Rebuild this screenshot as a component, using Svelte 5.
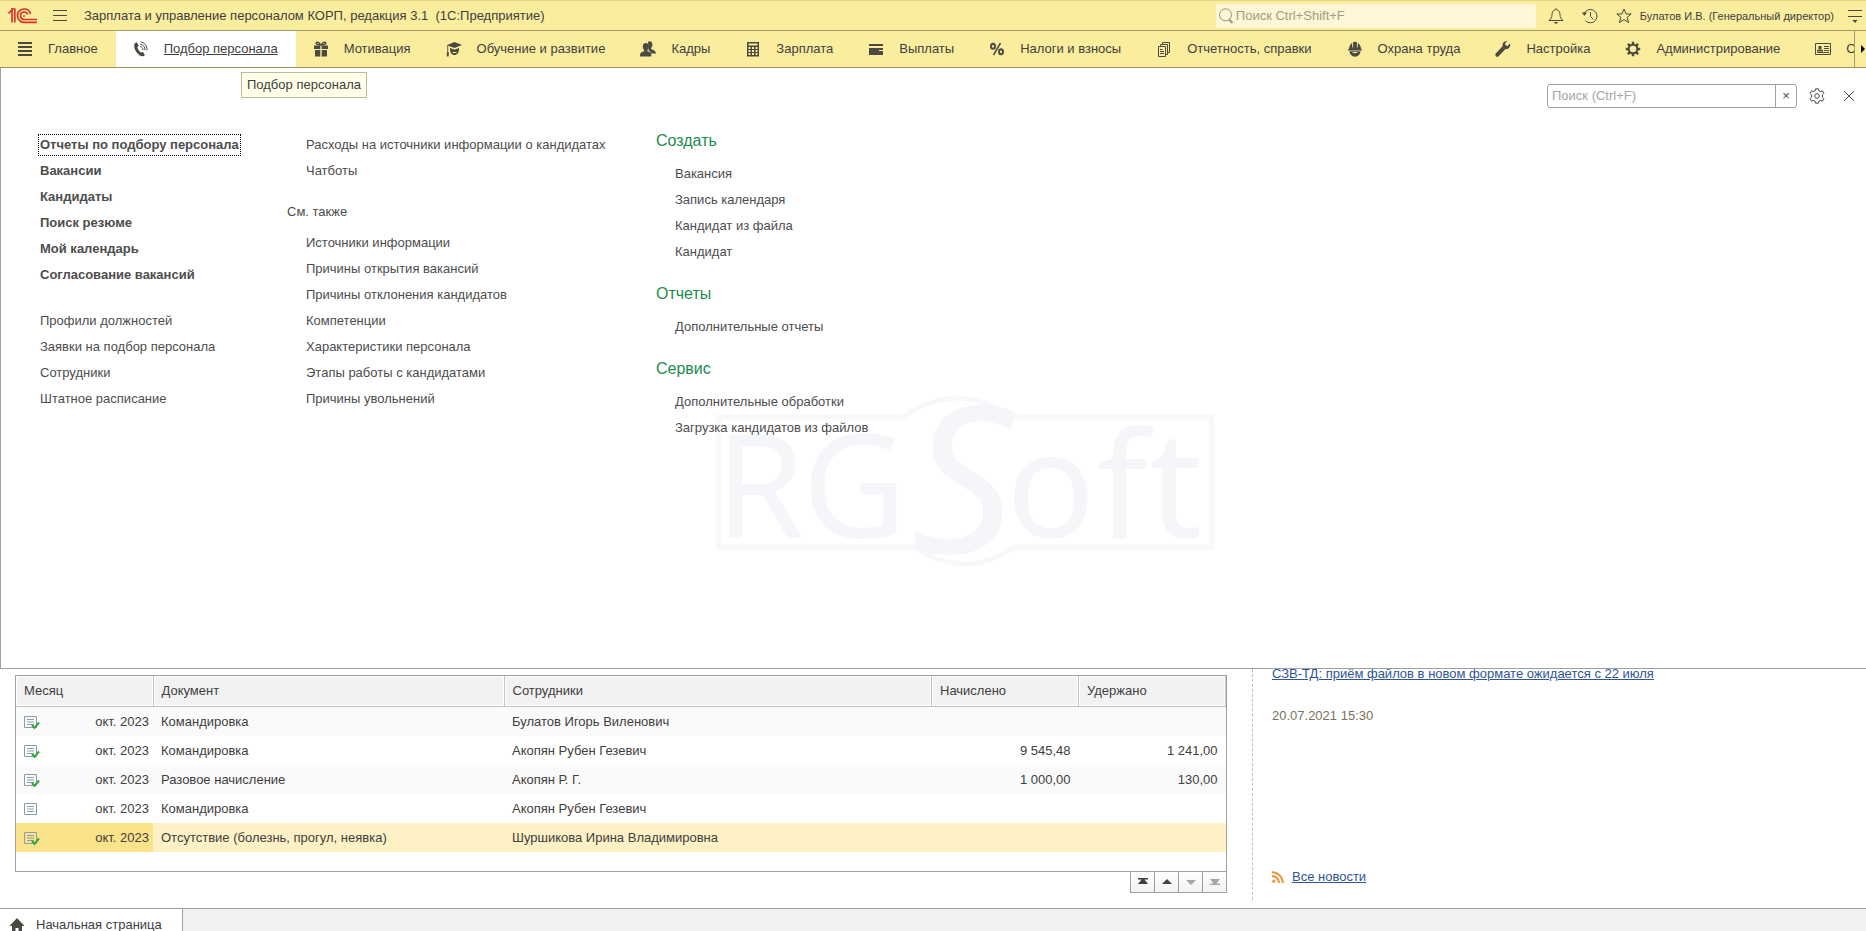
<script>
  const sections = [
    { icon: 'main', title: 'Главное' },
    { icon: 'phone', title: 'Подбор персонала', active: true },
    { icon: 'gift', title: 'Мотивация' },
    { icon: 'cap', title: 'Обучение и развитие' },
    { icon: 'people', title: 'Кадры' },
    { icon: 'calc', title: 'Зарплата' },
    { icon: 'wallet', title: 'Выплаты' },
    { icon: 'percent', title: 'Налоги и взносы' },
    { icon: 'docs', title: 'Отчетность, справки' },
    { icon: 'helmet', title: 'Охрана труда' },
    { icon: 'wrench', title: 'Настройка' },
    { icon: 'gear', title: 'Администрирование' },
    { icon: 'card', title: 'Сервис' },
  ];

  const important = [
    'Отчеты по подбору персонала',
    'Вакансии',
    'Кандидаты',
    'Поиск резюме',
    'Мой календарь',
    'Согласование вакансий',
  ];
  const regular = ['Профили должностей', 'Заявки на подбор персонала', 'Сотрудники', 'Штатное расписание'];
  const more = ['Расходы на источники информации о кандидатах', 'Чатботы'];
  const seeAlso = [
    'Источники информации',
    'Причины открытия вакансий',
    'Причины отклонения кандидатов',
    'Компетенции',
    'Характеристики персонала',
    'Этапы работы с кандидатами',
    'Причины увольнений',
  ];
  const actions = [
    { title: 'Создать', items: ['Вакансия', 'Запись календаря', 'Кандидат из файла', 'Кандидат'] },
    { title: 'Отчеты', items: ['Дополнительные отчеты'] },
    { title: 'Сервис', items: ['Дополнительные обработки', 'Загрузка кандидатов из файлов'] },
  ];

  const rows = [
    { posted: true, month: 'окт. 2023', doc: 'Командировка', who: 'Булатов Игорь Виленович', accrued: '', withheld: '' },
    { posted: true, month: 'окт. 2023', doc: 'Командировка', who: 'Акопян Рубен Гезевич', accrued: '9 545,48', withheld: '1 241,00' },
    { posted: true, month: 'окт. 2023', doc: 'Разовое начисление', who: 'Акопян Р. Г.', accrued: '1 000,00', withheld: '130,00' },
    { posted: false, month: 'окт. 2023', doc: 'Командировка', who: 'Акопян Рубен Гезевич', accrued: '', withheld: '' },
    { posted: true, month: 'окт. 2023', doc: 'Отсутствие (болезнь, прогул, неявка)', who: 'Шуршикова Ирина Владимировна', accrued: '', withheld: '' },
  ];

  let selected = $state(4);
  let globalQuery = $state('');
  let menuQuery = $state('');
</script>

{#snippet sectionIcon(name)}
  <svg class="icon" viewBox="0 0 16 16" aria-hidden="true">
    {#if name === 'main'}
      <path d="M1 1h14v2H1zM1 5h14v2H1zM1 9h14v2H1zM1 13h14v2H1z" />
    {:else if name === 'phone'}
      <path d="M3.600 1.200 5.800 4.600 4.400 6.200c.3 1.800 1.700 4 3.500 5.200l2-.5 2 3c-.7 1-1.800 1.500-3 1.300C4.800 14.200 1 8.800 1.200 4c.1-1.300 1-2.300 2.400-2.800z" />
      <path class="line" d="M7.200 5.400c1.600.3 2.700 1.700 2.800 3.700M7.400 3.200c2.900.4 4.700 2.700 4.600 6M7.600 1c4 .4 6.800 3.800 6.400 8.500" />
    {:else if name === 'gift'}
      <path d="M1 4.500h6.300V8H1zM8.700 4.500H15V8H8.700zM2 9h5.300v6.500H2zM8.700 9H14v6.500H8.700z" />
      <path class="line thick" d="M7.500 4C6.500 1.600 5 .8 3.700 1.500c-1.200.8-.4 2.500 3.800 2.500zM8.500 4c1-2.400 2.500-3.200 3.800-2.500 1.200.8.4 2.500-3.800 2.500z" />
    {:else if name === 'cap'}
      <path d="M8.500 1 16 4 8.500 7 2.200 4.800V11l.8 1-.5 3.500H.8V12l.5-1V4z" />
      <path d="M4 6.800l4.500 1.700L13 6.800V8c0 3.800-1.700 6-4.500 6S4 11.800 4 8z" />
      <path class="cut" d="M4.500 6.600 8.500 8l4-1.400M6.500 11.500h4" />
    {:else if name === 'people'}
      <path d="M8 .8c1.600-1.200 4.500-.3 4.400 2.700 0 1.600-.4 2.700-1.200 3.400v1.300c2 .6 4.600 1.200 4.800 4.300h-4.500L8.500 9z" />
      <path d="M5.800 2c2 0 3 1.400 3 3.300S8 8.700 7.400 9.200v1c2.300.6 4 1.400 4 3.800 0 .9-.2 1.500-.4 1.500H.4C.2 15.500 0 15 0 14c0-2.400 2-3.200 4.200-3.800v-1C3.500 8.700 2.800 7.200 2.800 5.300S3.800 2 5.800 2z" />
    {:else if name === 'calc'}
      <path d="M2 1h12v14.500H2zM3.500 2.500v2h9v-2zM3.500 6v2h2V6zm3.500 0v2h2V6zm3.500 0v2h2V6zM3.500 9v2h2V9zM7 9v2h2V9zm3.500 0v2h2V9zm-7 3v2h2v-2zM7 12v2h2v-2zm3.500 0v2h2v-2z" fill-rule="evenodd" />
    {:else if name === 'wallet'}
      <path d="M1 3h14v2H1zM1 7h14v2h-4v1h4v4H1z" />
    {:else if name === 'percent'}
      <path class="line thick" d="M11.500 2 4.500 14" />
      <ellipse class="line bold" cx="4" cy="5.200" rx="2" ry="2.500" />
      <ellipse class="line bold" cx="12" cy="10.800" rx="2" ry="2.500" />
    {:else if name === 'docs'}
      <path class="line" d="M2.500 5.500h7v10h-7zM4.500 5V3.500h7v10H10M6.500 3V1.500h7v10H12M4 8.500h2.500M4 10.500h4M4 12.500h4" />
    {:else if name === 'helmet'}
      <path d="M2 8C2 4.500 4 2.500 5 2l.4 4.500h.8L6 1.200C7 .5 9 .5 10 1.200l-.2 5.300h.8L11 2c1 .5 3 2.500 3 6l1 .4v1H1v-1zM2.500 10.300h11c0 3-2.500 5.400-5.500 5.400s-5.500-2.400-5.500-5.400zm2.500.7c1 1.500 5 1.500 6 0z" fill-rule="evenodd" />
    {:else if name === 'wrench'}
      <path d="M14.800 2.500 12.500 5l-2-.8-.5-2L12.300.4C9.500-.3 7 2 7.700 5L.8 12.500c-.8 1-.5 2 .2 2.700s1.800.8 2.600 0L10.500 8c3 .8 5.500-2 4.300-5.500z" />
    {:else if name === 'gear'}
      <circle class="line bold" cx="8" cy="8" r="4.300" />
      <path class="line teeth" d="M8 .8V4M8 12v3.200M.8 8H4M12 8h3.200M2.900 2.900l2 2M11.100 11.100l2 2M13.100 2.900l-2 2M4.900 11.100l-2 2" />
    {:else}
      <path class="line" d="M.5 2.500h15v11H.5zM9 5.500h5M9 7.500h5M9 9.500h5M2 11.500h12" />
      <path d="M3.500 5h3v3h-1v.8H8v1.700H2V8.800h2.500V8h-1z" />
    {/if}
  </svg>
{/snippet}

<div class="page">
  <header class="titlebar">
    <svg class="logo" viewBox="0 0 30 16" role="img" aria-label="1С">
      <g fill="none" stroke="#d6312b" stroke-width="1.700">
        <path d="M.5 5.500 4 2v12.500" />
        <path d="M3 1h3.800v13.500" />
        <path d="M22.500 6C21.800 3 19.300 1 16.200 1c-3.900 0-6.700 3-6.700 6.500 0 3.800 2.800 6.800 6.700 6.800H29" />
        <path d="M19.700 6.500C19.200 4.900 17.900 4 16.200 4c-2.200 0-3.700 1.600-3.700 3.600 0 2.200 1.500 3.900 3.700 3.900H29" />
        <path d="M16.200 7.200v1.500" />
      </g>
    </svg>
    <button class="icon-button burger" aria-label="Меню функций">
      <svg class="icon" viewBox="0 0 16 16"><path class="line" d="M1 2.500h14M1 7.500h14M1 12.500h14" /></svg>
    </button>
    <span class="app-title">Зарплата и управление персоналом КОРП, редакция 3.1&nbsp; (1С:Предприятие)</span>
    <label class="global-search">
      <svg class="icon" viewBox="0 0 16 16" aria-hidden="true">
        <circle class="line" cx="7.500" cy="6.800" r="6" />
        <path class="line bold" d="M11 11.500l3.500 3.500" />
      </svg>
      <input type="text" bind:value={globalQuery} placeholder="Поиск Ctrl+Shift+F" aria-label="Глобальный поиск" />
    </label>
    <div class="tools">
      <button class="icon-button" aria-label="Оповещения">
        <svg class="icon" viewBox="0 0 16 16">
          <path class="line" d="M8 .8c-.8 0-1.200.6-1.200 1.300C4.500 2.800 4 4.500 4 6.500c0 3-1 4-3 6h14c-2-2-3-3-3-6 0-2-.5-3.700-2.800-4.400C9.200 1.400 8.800.8 8 .8z" />
          <path d="M5.500 14h5L8 16z" />
        </svg>
      </button>
      <button class="icon-button" aria-label="История">
        <svg class="icon" viewBox="0 0 16 16">
          <path class="line" d="M2 6A6.700 6.700 0 1 1 3.500 12.800M8.500 4v4.500l3 3" />
          <path d="M0 4.500h5L2.300 8z" />
        </svg>
      </button>
      <button class="icon-button" aria-label="Избранное">
        <svg class="icon" viewBox="0 0 16 16">
          <path class="line" d="M8 1l2.100 5h5.100l-4.100 3.300 1.600 5.400L8 11.500l-4.700 3.200 1.600-5.400L.8 6h5.100z" />
        </svg>
      </button>
    </div>
    <a class="user" href="#user">Булатов И.В. (Генеральный директор)</a>
    <button class="icon-button" aria-label="Сервис и настройки">
      <svg class="icon" viewBox="0 0 16 16">
        <path class="line" d="M1 2.500h14M1 8.500h14" />
        <path d="M5.500 12h5L8 15z" />
      </svg>
    </button>
  </header>

  <nav class="sections">
    <div class="section-list">
      {#each sections as section}
        <a class="section" class:active={section.active} href="#section">
          {@render sectionIcon(section.icon)}
          <span>{section.title}</span>
        </a>
      {/each}
    </div>
    <button class="scroll-right" aria-label="Прокрутить вправо">
      <svg viewBox="0 0 5 10" width="5" height="10"><path d="M0 1l4 4-4 4z" /></svg>
    </button>
    <div class="tooltip" role="tooltip">Подбор персонала</div>
  </nav>

  <main class="menu-panel">
    <svg class="watermark" viewBox="0 0 500 174" aria-hidden="true">
      <path class="frame" d="M4 22h184q56-38 108 0h201v130H300q-50 34-100 0H4z" />
      <text x="0" y="143" font-size="144">R</text>
      <text x="87" y="143" font-size="144">G</text>
      <text class="big" x="196" y="158" font-size="204">S</text>
      <text x="291" y="143" font-size="148">o</text>
      <text x="382" y="143" font-size="148">f</text>
      <text x="434" y="143" font-size="148">t</text>
    </svg>

    <div class="panel-tools">
      <div class="menu-search">
        <input type="text" bind:value={menuQuery} placeholder="Поиск (Ctrl+F)" aria-label="Поиск по меню" />
        <button aria-label="Очистить" onclick={() => (menuQuery = '')}>×</button>
      </div>
      <button class="icon-button" aria-label="Настройка меню">
        <svg class="icon" viewBox="0 0 16 16">
          <path class="line" d="M6.500.8h3l.4 2 1.500.8 2-.8 1.500 2.500-1.500 1.500v2.400l1.500 1.500-1.500 2.500-2-.8-1.500.8-.4 2h-3l-.4-2-1.500-.8-2 .8-1.500-2.500 1.500-1.500V6.800L1.100 5.300l1.500-2.500 2 .8 1.500-.8z" />
          <circle class="line" cx="8" cy="8" r="2.300" />
        </svg>
      </button>
      <button class="icon-button close" aria-label="Закрыть">
        <svg class="icon" viewBox="0 0 16 16"><path class="line" d="M3 3l10 10M13 3 3 13" /></svg>
      </button>
    </div>

    <div class="columns">
      <div class="column first">
        <ul class="important">
          {#each important as item, i}
            <li><a class:focused={i === 0} href="#command">{item}</a></li>
          {/each}
        </ul>
        <ul>
          {#each regular as item}
            <li><a href="#command">{item}</a></li>
          {/each}
        </ul>
      </div>
      <div class="column second">
        <ul class="indent">
          {#each more as item}
            <li><a href="#command">{item}</a></li>
          {/each}
        </ul>
        <h3>См. также</h3>
        <ul class="indent">
          {#each seeAlso as item}
            <li><a href="#command">{item}</a></li>
          {/each}
        </ul>
      </div>
      <div class="column third">
        {#each actions as group}
          <h2>{group.title}</h2>
          <ul class="indent">
            {#each group.items as item}
              <li><a href="#command">{item}</a></li>
            {/each}
          </ul>
        {/each}
      </div>
    </div>
  </main>

  <div class="home">
    <section class="documents">
      <div class="table-box">
        <table>
          <colgroup>
            <col class="c-month" /><col class="c-doc" /><col class="c-who" /><col class="c-sum" /><col class="c-sum" />
          </colgroup>
          <thead>
            <tr><th>Месяц</th><th>Документ</th><th>Сотрудники</th><th>Начислено</th><th>Удержано</th></tr>
          </thead>
          <tbody>
            {#each rows as row, i}
              <tr class:selected={selected === i} onclick={() => (selected = i)}>
                <td>
                  <div class="month">
                    <svg class="icon" viewBox="0 0 16 16" aria-hidden="true">
                      <path class="doc" d="M.5 2.500h12v11H.5zM3 5.500h7M3 8h7M3 10.500h7" />
                      {#if row.posted}
                        <path class="check" d="M8 11l2.500 3L15 8.500" />
                      {/if}
                    </svg>
                    <span>{row.month}</span>
                  </div>
                </td>
                <td>{row.doc}</td>
                <td>{row.who}</td>
                <td class="num">{row.accrued}</td>
                <td class="num">{row.withheld}</td>
              </tr>
            {/each}
          </tbody>
        </table>
      </div>
      <div class="pager">
        <button aria-label="В начало"><svg viewBox="0 0 12 8"><path d="M1 0h10v1.500H7.500L11 6H1l3.500-4.500H1z" /></svg></button>
        <button aria-label="Вверх"><svg viewBox="0 0 12 8"><path d="M6 1l5 5H1z" /></svg></button>
        <button aria-label="Вниз" disabled><svg viewBox="0 0 12 8"><path d="M6 7l5-5H1z" /></svg></button>
        <button aria-label="В конец" disabled><svg viewBox="0 0 12 8"><path d="M1 1h10L7.500 5.500H11V7H1V5.500h3.500z" /></svg></button>
      </div>
    </section>
    <aside class="news">
      <a href="#news">СЗВ-ТД: приём файлов в новом формате ожидается с 22 июля</a>
      <time datetime="2021-07-20T15:30">20.07.2021 15:30</time>
      <div class="all-news">
        <svg viewBox="0 0 12 12" width="12" height="12" aria-hidden="true">
          <circle cx="1.800" cy="10.200" r="1.600" />
          <path d="M0 5a7 7 0 0 1 7 7M0 1.200A10.800 10.800 0 0 1 10.800 12" />
        </svg>
        <a href="#news">Все новости</a>
      </div>
    </aside>
  </div>

  <footer class="windows">
    <button class="window-tab">
      <svg class="icon" viewBox="0 0 16 16" aria-hidden="true"><path d="M8 1 .5 9H3v6h3.500v-4h3v4H13V9h2.500z" /></svg>
      Начальная страница
    </button>
  </footer>
</div>

<style>
  :global(body) {
    margin: 0;
  }

  .page {
    --text: #404040;
    --line: #a0a0a0;
    --yellow: #fbed9e;
    --olive: #a39c66;
    display: flex;
    flex-direction: column;
    height: 100vh;
    overflow: hidden;
    background: #fff;
    color: var(--text);
    font-family: "Liberation Sans", Arial, sans-serif;
    font-size: 13px;
    line-height: 16px;
  }

  button, input {
    margin: 0;
    padding: 0;
    border: none;
    background: none;
    color: inherit;
    font: inherit;
  }

  a {
    color: inherit;
    text-decoration: none;
  }

  ul {
    margin: 0;
    padding: 0;
    list-style: none;
  }

  .icon {
    flex: none;
    display: block;
    width: 16px;
    height: 16px;
    fill: #4a4a42;
  }

  .line {
    fill: none;
    stroke: #4a4a42;
    stroke-width: 1;
  }

  .thick { stroke-width: 1.5; }
  .bold { stroke-width: 2; }
  .teeth { stroke-width: 2.5; }

  .cut {
    fill: none;
    stroke: var(--yellow);
    stroke-width: 1;
  }

  .icon-button {
    flex: none;
    display: block;
  }

  .titlebar {
    display: flex;
    align-items: center;
    box-sizing: border-box;
    height: 31px;
    padding: 0 3px 0 8px;
    border-top: 1px solid #e3d387;
    border-bottom: 1px solid var(--olive);
    background: var(--yellow);
  }

  .logo {
    flex: none;
    width: 30px;
    height: 16px;
  }

  .burger {
    margin: 0 16px 0 14px;
  }

  .app-title {
    flex: 1;
    white-space: nowrap;
  }

  .global-search {
    display: flex;
    align-items: center;
    gap: 2px;
    box-sizing: border-box;
    width: 320px;
    height: 24px;
    padding-left: 2px;
    background: #fef6d5;
  }

  .global-search .line {
    stroke: #99947c;
  }

  .global-search input {
    flex: 1;
    min-width: 0;
    outline: none;
  }

  .global-search input::placeholder {
    color: #a29c86;
    opacity: 1;
  }

  .tools {
    display: flex;
    gap: 18px;
    margin: 0 8px 0 12px;
  }

  .user {
    margin-right: 13px;
    font-size: 11px;
    white-space: nowrap;
  }

  .sections {
    position: relative;
    display: flex;
    height: 36px;
    border-bottom: 1px solid #98935c;
    background: var(--yellow);
  }

  .section-list {
    display: flex;
    flex: 1;
    min-width: 0;
    overflow: hidden;
  }

  .section {
    flex: none;
    display: flex;
    align-items: center;
    gap: 15px;
    padding: 0 18px 0 17px;
    white-space: nowrap;
  }

  .section.active {
    background: #fff;
    text-decoration: underline;
  }

  .scroll-right {
    display: flex;
    align-items: center;
    justify-content: flex-end;
    width: 12px;
    border-left: 1px solid var(--olive);
  }

  .tooltip {
    position: absolute;
    top: 41px;
    left: 241px;
    z-index: 2;
    padding: 4px 5px;
    border: 1px solid #bfbc9c;
    background: #ffffe9;
  }

  .menu-panel {
    position: relative;
    flex: 1;
    padding: 16px 9px 0 38px;
    border-bottom: 1px solid var(--line);
    border-left: 1px solid var(--line);
    color: #4d4d4d;
  }

  .watermark {
    position: absolute;
    top: 327px;
    left: 714px;
    width: 500px;
    height: 174px;
    fill: #f5f6f9;
    font-family: "Noto Sans", sans-serif;
  }

  .watermark .big {
    font-style: italic;
  }

  .frame {
    fill: none;
    stroke: #f8f8fa;
    stroke-width: 5;
  }

  .panel-tools {
    position: relative;
    display: flex;
    align-items: center;
    justify-content: flex-end;
    gap: 12px;
  }

  .menu-search {
    display: flex;
    box-sizing: border-box;
    width: 250px;
    height: 24px;
    border: 1px solid var(--line);
    border-radius: 3px;
  }

  .menu-search input {
    flex: 1;
    min-width: 0;
    padding-left: 4px;
    outline: none;
  }

  .menu-search input::placeholder {
    color: #a6a6a6;
    opacity: 1;
  }

  .menu-search button {
    width: 21px;
    border-left: 1px solid var(--line);
  }

  .close {
    margin-left: 4px;
  }

  .columns {
    position: relative;
    display: flex;
    padding-top: 23px;
  }

  .column {
    flex: none;
    padding-top: 1px;
  }

  .column li {
    display: flex;
    align-items: center;
    height: 26px;
    white-space: nowrap;
  }

  .first { width: 248px; }
  .second { width: 369px; }
  .third { padding-top: 0; }

  .important {
    margin-bottom: 20px;
    font-weight: bold;
  }

  .column a {
    padding: 2px 1px;
  }

  .focused {
    outline: 1px dotted #000;
  }

  .indent {
    padding-left: 18px;
  }

  h3 {
    margin: 20px 0 10px;
    font-size: 13px;
    font-weight: normal;
    line-height: 16px;
  }

  h2 {
    margin: 0 0 10px;
    color: #1d8b4f;
    font-size: 16px;
    font-weight: normal;
    line-height: 20px;
  }

  .third ul {
    margin-bottom: 19px;
  }

  .home {
    display: flex;
    height: 239px;
  }

  .documents {
    flex: 0 1 1212px;
    padding: 6px 25px 0 15px;
  }

  .table-box {
    height: 195px;
    border: 1px solid var(--line);
  }

  table {
    width: 100%;
    border-collapse: collapse;
    table-layout: fixed;
  }

  .c-month { width: 137px; }
  .c-doc { width: 351px; }
  .c-sum { width: 147px; }

  th {
    height: 30px;
    padding: 0 8px;
    border-right: 1px solid #c4c4c4;
    border-bottom: 1px solid #c4c4c4;
    background: #f2f2f2;
    box-shadow: inset 0 0 0 1px #fff;
    font-weight: normal;
    text-align: left;
  }

  td {
    height: 29px;
    padding: 0 8px;
    white-space: nowrap;
  }

  tbody tr:nth-child(odd) {
    background: #fafafa;
  }

  tbody tr.selected {
    background: #fdf1c5;
  }

  tr.selected td:first-child {
    background: #fbe38c;
  }

  td:first-child {
    padding-right: 4px;
  }

  .month {
    display: flex;
    align-items: center;
    justify-content: space-between;
  }

  .doc {
    fill: none;
    stroke: #8d9cac;
  }

  .check {
    fill: none;
    stroke: #35a83c;
    stroke-width: 2;
  }

  .num {
    text-align: right;
  }

  .pager {
    display: flex;
    justify-content: flex-end;
  }

  .pager button {
    display: flex;
    align-items: center;
    justify-content: center;
    width: 25px;
    height: 21px;
    margin-left: -1px;
    border: 1px solid var(--line);
    border-top: none;
    background: linear-gradient(#fff, #f2f2f2);
  }

  .pager svg {
    width: 12px;
    height: 8px;
    fill: #404040;
  }

  .pager button:disabled svg {
    fill: #a6a6a6;
  }

  .news {
    flex: 1;
    display: flex;
    flex-direction: column;
    align-items: flex-start;
    box-sizing: border-box;
    height: 231px;
    padding: 0 19px 15px;
    border-left: 1px dashed #c0c0c0;
    overflow: hidden;
  }

  .news a {
    margin-top: -3px;
    color: #2f5597;
    text-decoration: underline;
  }

  .news time {
    margin-top: 26px;
    color: #7a7158;
  }

  .all-news {
    display: flex;
    align-items: center;
    gap: 8px;
    margin-top: auto;
  }

  .all-news a {
    margin: 0;
  }

  .all-news svg {
    fill: #f0943a;
  }

  .all-news path {
    fill: none;
    stroke: #f0943a;
    stroke-width: 2;
  }

  .windows {
    flex: none;
    display: flex;
    height: 22px;
    border-top: 1px solid var(--line);
    background: #f2f2f2;
  }

  .window-tab {
    display: flex;
    align-items: center;
    gap: 11px;
    height: 32px;
    padding: 0 20px 0 9px;
    border-right: 1px solid var(--line);
    background: #fff;
  }
</style>
